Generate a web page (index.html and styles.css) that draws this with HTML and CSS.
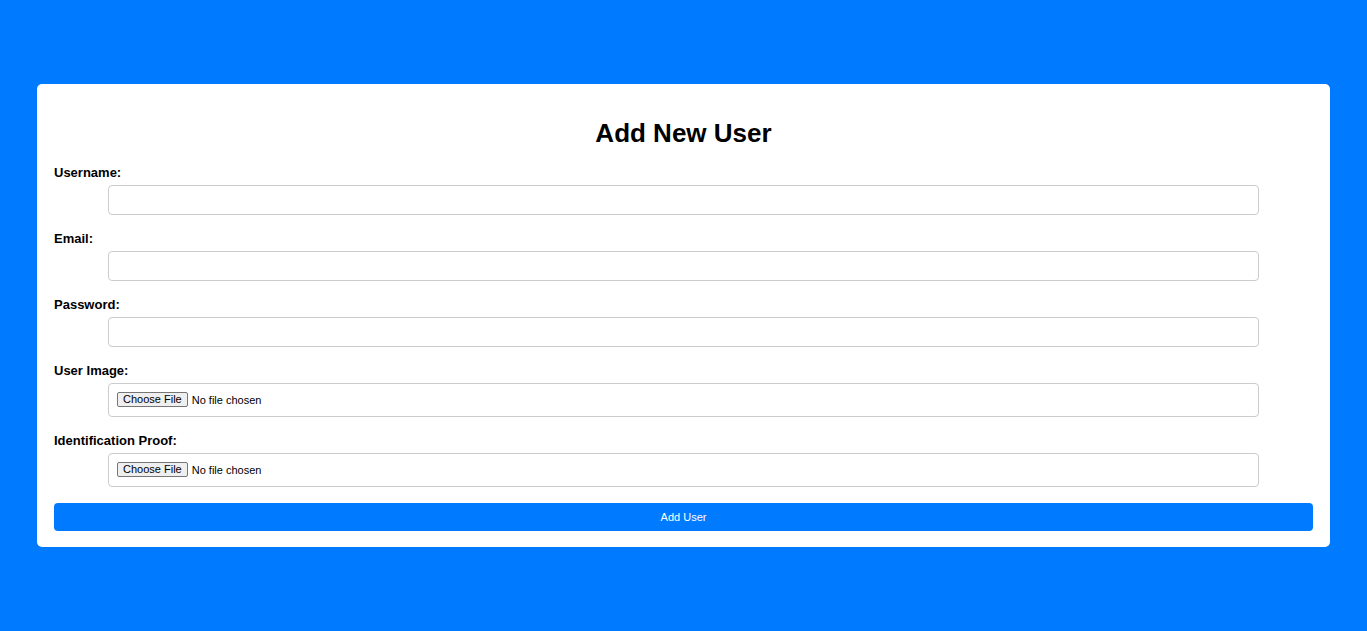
FILE: index.html
```html
<!DOCTYPE html>
<html lang="en">
<head>
<meta charset="utf-8">
<title>Add New User</title>
<link rel="stylesheet" href="styles.css">
</head>
<body>
<main class="card">
  <h1 class="title">Add New User</h1>
  <form class="form">
    <label class="label" for="username">Username:</label>
    <input class="field" type="text" id="username">
    <label class="label" for="email">Email:</label>
    <input class="field" type="email" id="email">
    <label class="label" for="password">Password:</label>
    <input class="field" type="password" id="password">
    <label class="label" for="image">User Image:</label>
    <input class="field file" type="file" id="image">
    <label class="label" for="proof">Identification Proof:</label>
    <input class="field file" type="file" id="proof">
    <button class="submit" type="button">Add User</button>
  </form>
</main>
</body>
</html>
```

FILE: styles.css
```css
html, body {
  margin: 0;
  height: 100%;
}
body {
  background: #007bff;
  font-family: "Liberation Sans", Arial, sans-serif;
  display: flex;
  align-items: center;
  padding: 0 37px;
  box-sizing: border-box;
}
.card {
  flex: 1;
  background: #fff;
  border-radius: 5px;
  padding: 17px 17px 16px;
  box-sizing: border-box;
}
.title {
  margin: 17px 0 17px;
  font-size: 26px;
  line-height: 30px;
  font-weight: bold;
  text-align: center;
  color: #000;
}
.form {
  display: flex;
  flex-direction: column;
}
.label {
  font-size: 13px;
  line-height: 15px;
  font-weight: bold;
  color: #000;
  margin-bottom: 5px;
}
.field {
  margin: 0 54px 16px;
  height: 30px;
  box-sizing: border-box;
  padding: 0 8px;
  border: 1px solid #ccc;
  border-radius: 4px;
  font-family: "Liberation Sans", Arial, sans-serif;
  font-size: 11px;
  background: #fff;
  outline: none;
}
.field.file {
  height: 34px;
  padding: 8px;
  line-height: 16px;
  color: #000;
}
.field.file::file-selector-button {
  font-family: "Liberation Sans", Arial, sans-serif;
  font-size: 11px;
  line-height: 13px;
  height: 15px;
  padding: 0 5px;
  margin: 0 4px 0 0;
  border: 1px solid #767676;
  border-radius: 2px;
  background: #efefef;
  color: #000;
  vertical-align: top;
}
.submit {
  height: 28px;
  border: none;
  border-radius: 4px;
  background: #007bff;
  color: #fff;
  font-family: "Liberation Sans", Arial, sans-serif;
  font-size: 11px;
  cursor: pointer;
}
```
